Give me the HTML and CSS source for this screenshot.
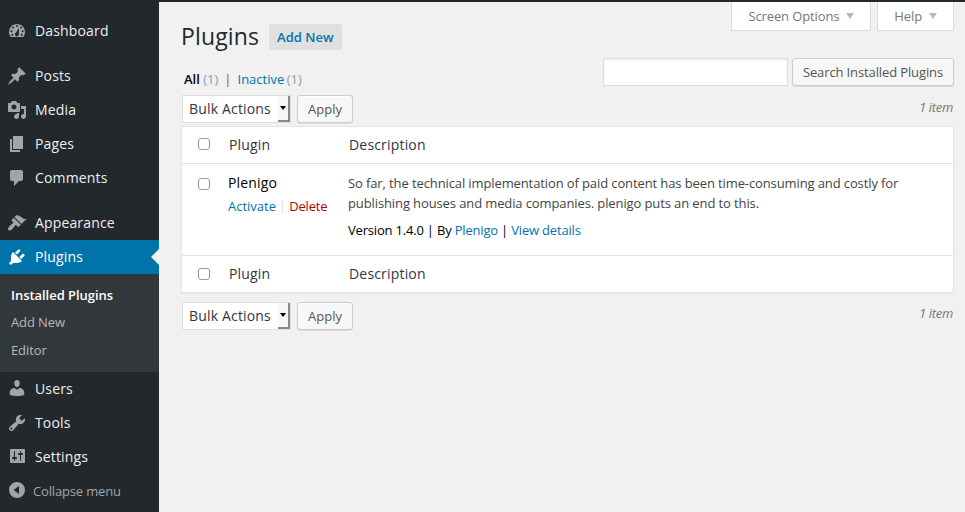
FILE: index.html
```html
<!DOCTYPE html>
<html lang="en">
<head>
<meta charset="utf-8">
<title>Plugins</title>
<link rel="stylesheet" href="styles.css">
</head>
<body>
<div class="adminbar"></div>
<div class="layout">
<nav class="menu">
  <a class="item"><svg viewBox="0 0 20 20"><path fill-rule="evenodd" d="M3.76 16h12.48c1.1-1.37 1.76-3.11 1.76-5 0-4.42-3.58-8-8-8s-8 3.58-8 8c0 1.89.66 3.63 1.76 5zM10 4a1 1 0 1 1 0 2a1 1 0 0 1 0-2zM6 5.6a1 1 0 1 1 0 2a1 1 0 0 1 0-2zM14 5.6a1 1 0 1 1 0 2a1 1 0 0 1 0-2zM4.3 9.3a1 1 0 1 1 0 2a1 1 0 0 1 0-2zM15.7 9.3a1 1 0 1 1 0 2a1 1 0 0 1 0-2zM5.3 12.7a1 1 0 1 1 0 2a1 1 0 0 1 0-2zM14.7 12.7a1 1 0 1 1 0 2a1 1 0 0 1 0-2zM12 6.8l-.1 6.2a2 2 0 1 1-2.8-1.4z"/></svg>Dashboard</a>
  <a class="item group"><svg viewBox="0 0 20 20"><path d="M10.44 3.02l1.82-1.82 6.36 6.35-1.83 1.82c-1.05-.68-2.48-.57-3.41.36l-.75.75c-.92.93-1.04 2.35-.35 3.41l-1.83 1.82-2.41-2.41-2.8 2.79c-.42.42-3.38 2.71-3.8 2.29s1.86-3.39 2.28-3.81l2.79-2.79L4.1 9.36l1.83-1.82c1.05.69 2.48.57 3.4-.36l.75-.75c.93-.92 1.05-2.35.36-3.41z"/></svg>Posts</a>
  <a class="item"><svg viewBox="0 0 20 20"><path d="M13 11V4c0-.55-.45-1-1-1h-1.67L9 1H5L3.67 3H2c-.55 0-1 .45-1 1v7c0 .55.45 1 1 1h10c.55 0 1-.45 1-1zM7 4.5c1.38 0 2.5 1.12 2.5 2.5S8.38 9.5 7 9.5 4.5 8.38 4.5 7 5.62 4.5 7 4.5zM14 6h5v10.5c0 1.38-1.12 2.5-2.5 2.5S14 17.88 14 16.5s1.12-2.5 2.5-2.5c.17 0 .34.02.5.05V9h-3V6zm-4 8.05V13h2v3.5c0 1.38-1.12 2.5-2.5 2.5S7 17.88 7 16.5 8.12 14 9.5 14c.17 0 .34.02.5.05z"/></svg>Media</a>
  <a class="item"><svg viewBox="0 0 20 20"><path d="M6 15V2h10v13H6zm-1 1h8v2H3V5h2v11z"/></svg>Pages</a>
  <a class="item"><svg viewBox="0 0 20 20"><path d="M5 2h9c1.1 0 2 .9 2 2v7c0 1.1-.9 2-2 2h-2l-5 5v-5H5c-1.1 0-2-.9-2-2V4c0-1.1.9-2 2-2z"/></svg>Comments</a>
  <a class="item group"><svg viewBox="0 0 20 20"><path d="M14.48 11.06L7.41 3.99l1.5-1.5c.5-.56 2.3-.47 3.51.32 1.21.8 1.43 1.28 2.91 2.1 1.18.64 2.45 1.26 4.45.85zm-.71.71L6.7 4.7 4.93 6.47c-.39.39-.39 1.02 0 1.41l1.06 1.06c.39.39.39 1.03 0 1.42-.6.6-1.43 1.11-2.21 1.69-.35.26-.7.53-1.01.84C1.43 14.23.4 16.08 1.4 17.07c.99 1 2.84-.03 4.18-1.36.31-.31.58-.66.85-1.02.57-.78 1.08-1.61 1.69-2.21.39-.39 1.02-.39 1.41 0l1.06 1.06c.39.39 1.02.39 1.41 0z"/></svg>Appearance</a>
  <a class="item current"><svg viewBox="0 0 20 20"><path d="M13.11 4.36L9.87 7.6 8 5.73l3.24-3.24c.35-.34 1.05-.2 1.56.32.52.51.66 1.21.31 1.55zm-8 1.77l.91-1.12 9.01 9.01-1.19.84c-.71.71-2.63 1.16-3.82 1.16H6.14L4.9 17.26c-.59.59-1.54.59-2.12 0-.59-.58-.59-1.53 0-2.12l1.24-1.24v-3.88c0-1.13.4-3.19 1.09-3.89zm7.26 3.97l3.24-3.24c.34-.35 1.04-.21 1.55.31.52.51.66 1.21.31 1.55l-3.24 3.25z"/></svg>Plugins</a>
  <div class="submenu">
    <a class="active">Installed Plugins</a>
    <a>Add New</a>
    <a>Editor</a>
  </div>
  <a class="item"><svg viewBox="0 1 20 20"><path d="M10 9.25c-2.27 0-2.73-3.44-2.73-3.44C7 4.02 7.82 2 9.97 2c2.16 0 2.98 2.02 2.71 3.81 0 0-.41 3.44-2.68 3.44zm0 2.57L12.72 10c2.39 0 4.52 2.33 4.52 4.53v2.49s-3.65 1.13-7.24 1.13c-3.65 0-7.24-1.13-7.24-1.13v-2.49c0-2.25 1.94-4.48 4.47-4.48z"/></svg>Users</a>
  <a class="item"><svg viewBox="0 0 20 20"><path d="M16.68 9.77c-1.34 1.34-3.3 1.67-4.95.99l-5.41 6.52c-.99.99-2.59.99-3.58 0s-.99-2.59 0-3.57l6.52-5.42c-.68-1.65-.35-3.61.99-4.95 1.28-1.28 3.12-1.62 4.72-1.06l-2.89 2.89 2.82 2.82 2.86-2.87c.53 1.58.18 3.39-1.08 4.65zM3.81 16.21c.4.39 1.04.39 1.43 0 .4-.4.4-1.04 0-1.43-.39-.4-1.03-.4-1.43 0-.39.39-.39 1.03 0 1.43z"/></svg>Tools</a>
  <a class="item"><svg viewBox="0 1 20 20"><path d="M18 16V4c0-.55-.45-1-1-1H4c-.55 0-1 .45-1 1v12c0 .55.45 1 1 1h13c.55 0 1-.45 1-1zM8 11h1c.55 0 1 .45 1 1s-.45 1-1 1H8v1.5c0 .28-.22.5-.5.5s-.5-.22-.5-.5V13H6c-.55 0-1-.45-1-1s.45-1 1-1h1V5.5c0-.28.22-.5.5-.5s.5.22.5.5V11zm5-2h-1c-.55 0-1-.45-1-1s.45-1 1-1h1V5.5c0-.28.22-.5.5-.5s.5.22.5.5V7h1c.55 0 1 .45 1 1s-.45 1-1 1h-1v5.5c0 .28-.22.5-.5.5s-.5-.22-.5-.5V9z"/></svg>Settings</a>
  <a class="item collapse"><svg viewBox="0 0 20 20"><path fill-rule="evenodd" d="M10 1a8 8 0 1 1 0 16a8 8 0 0 1 0-16zM12 5L6.5 9l5.5 4z"/></svg>Collapse menu</a>
</nav>
<main class="content">
  <div class="screen-meta">
    <button class="tab">Screen Options<i class="caret"></i></button>
    <button class="tab">Help<i class="caret"></i></button>
  </div>
  <h1>Plugins <a class="add-new">Add New</a></h1>
  <div class="filters">
    <div class="views"><b>All</b> <span class="count">(1)</span><span class="bar">|</span><a>Inactive</a> <span class="count">(1)</span></div>
    <div class="search"><input type="text" aria-label="Search"><button class="button">Search Installed Plugins</button></div>
  </div>
  <div class="tablenav">
    <div class="select">Bulk Actions<span class="arrow"></span></div>
    <button class="button apply">Apply</button>
    <span class="total">1 item</span>
  </div>
  <div class="table">
    <div class="row head"><span class="check"></span><span>Plugin</span><span>Description</span></div>
    <div class="row plugin">
      <span class="check"></span>
      <div class="name"><strong>Plenigo</strong><div class="actions"><a>Activate</a><span class="sep">|</span><a class="delete">Delete</a></div></div>
      <div class="desc"><p>So far, the technical implementation of paid content has been time-consuming and costly for<br>publishing houses and media companies. plenigo puts an end to this.</p><div class="version">Version 1.4.0 | By <a>Plenigo</a> | <a>View details</a></div></div>
    </div>
    <div class="row foot"><span class="check"></span><span>Plugin</span><span>Description</span></div>
  </div>
  <div class="tablenav bottom">
    <div class="select">Bulk Actions<span class="arrow"></span></div>
    <button class="button apply">Apply</button>
    <span class="total">1 item</span>
  </div>
</main>
</div>
</body>
</html>
```

FILE: styles.css
```css
* { box-sizing: border-box; }
body {
  margin: 0;
  height: 512px;
  overflow: hidden;
  background: #f1f1f1;
  color: #444;
  font: 13px/20px "Open Sans", sans-serif;
}
button, input { font: inherit; margin: 0; }
a { color: #0074ad; }
.adminbar { height: 2px; background: #23282d; }
.layout { display: flex; height: 510px; }

/* Admin menu */
.menu { width: 159px; flex: none; padding-top: 12px; background: #23282d; }
.item {
  display: flex;
  align-items: center;
  gap: 8px;
  height: 34px;
  padding-left: 7px;
  color: #eee;
  font-size: 14px;
  letter-spacing: .15px;
}
.item svg { width: 20px; height: 20px; fill: #a0a5aa; }
.group { margin-top: 11px; }
.current { position: relative; background: #0073aa; color: #fff; }
.current svg { fill: #fff; }
.current::after {
  content: "";
  position: absolute;
  right: 0;
  top: 9px;
  border: 8px solid transparent;
  border-left-width: 0;
  border-right-color: #f1f1f1;
}
.submenu { height: 98px; padding: 7px 11px; background: #32373c; }
.submenu a { display: block; height: 28px; line-height: 28px; color: #b4b9be; letter-spacing: -.1px; }
.submenu .active { height: 27px; color: #fff; font-weight: 600; letter-spacing: -.04px; }
.collapse { gap: 6px; color: #a0a5aa; font-size: 13px; letter-spacing: -.16px; }

/* Content */
.content { flex: 1; padding: 0 11px 0 22px; }
.screen-meta { display: flex; justify-content: flex-end; gap: 6px; height: 29px; }
.tab {
  display: flex;
  align-items: center;
  gap: 7px;
  height: 29px;
  padding: 0 16px;
  background: #fff;
  border: 1px solid #ddd;
  border-top: 0;
  color: #777;
  letter-spacing: -.12px;
  box-shadow: 0 1px 1px -1px rgba(0,0,0,.1);
}
.caret { border: 4px solid transparent; border-top: 6px solid #b4b9be; border-bottom: 0; }
h1 {
  display: flex;
  align-items: flex-start;
  gap: 10px;
  height: 26px;
  margin: -7px 0 0;
  color: #23282d;
  font-size: 23px;
  font-weight: 400;
  line-height: 24px;
  letter-spacing: .14px;
}
.add-new {
  height: 26px;
  padding: 0 8px;
  border-radius: 2px;
  background: #e0e0e0;
  font-size: 13px;
  font-weight: 600;
  line-height: 26px;
  letter-spacing: 0;
}
.filters { display: flex; justify-content: space-between; height: 45px; padding-top: 8px; }
.views { padding: 11px 0 0 3px; }
.views b { color: #000; font-weight: 600; }
.count { color: #999; }
.bar { margin: 0 6px; color: #666; }
.views .count:last-child { margin-left: -1px; }
.search { display: flex; gap: 4px; }
.search input {
  width: 185px;
  height: 28px;
  border: 1px solid #ddd;
  background: #fff;
  box-shadow: inset 0 1px 2px rgba(0,0,0,.07);
}
.button {
  height: 28px;
  padding: 0 10px;
  border: 1px solid #ccc;
  border-radius: 3px;
  background: #f7f7f7;
  color: #555;
  letter-spacing: -.12px;
  box-shadow: inset 0 1px 0 #fff, 0 1px 0 rgba(0,0,0,.08);
}
.apply { letter-spacing: 0; }
.tablenav { display: flex; height: 31px; }
.select {
  display: flex;
  width: 109px;
  height: 28px;
  margin: 0 6px 0 1px;
  padding-left: 6px;
  border: 1px solid #ddd;
  background: #fff;
  color: #32373c;
  font-size: 14px;
  line-height: 26px;
  letter-spacing: .17px;
  justify-content: space-between;
  white-space: nowrap;
}
.arrow {
  display: flex;
  width: 12px;
  align-items: center;
  justify-content: center;
  border-right: 2px solid #888;
  border-bottom: 2px solid #888;
  background: #f7f6f5;
}
.arrow::before { content: ""; border: 3.5px solid transparent; border-top: 4px solid #000; border-bottom: 0; }
.total { margin-left: auto; padding: 2px 1px 0 0; color: #777; font-style: italic; letter-spacing: -.3px; }

/* Plugin table */
.table { border: 1px solid #e5e5e5; background: #fff; box-shadow: 0 1px 1px rgba(0,0,0,.04); }
.row { display: grid; grid-template-columns: 47px 120px 1fr; }
.head, .foot { height: 37px; align-items: center; color: #32373c; font-size: 14px; letter-spacing: .18px; }
.head { border-bottom: 1px solid #e1e1e1; }
.foot { border-top: 1px solid #e1e1e1; }
.check { width: 12px; height: 12px; margin-left: 16px; border: 1px solid #999; border-radius: 3px; background: #fff; }
.head .check { margin-bottom: 2px; }
.plugin { height: 91px; }
.plugin .check { margin-top: 14px; }
.name, .desc { margin-left: -1px; padding-top: 9px; white-space: nowrap; }
.name strong { display: block; color: #000; font-size: 14px; font-weight: 400; letter-spacing: .18px; }
.actions { margin-top: 3px; }
.sep { margin: 0 3px; color: #ddd; }
.delete { color: #b00000; letter-spacing: -.16px; }
.desc p { margin: 0 0 7px; letter-spacing: -.11px; }
.version { color: #000; letter-spacing: -.19px; }
.bottom { margin-top: 9px; }
.bottom .total { padding-top: 1px; }
```
